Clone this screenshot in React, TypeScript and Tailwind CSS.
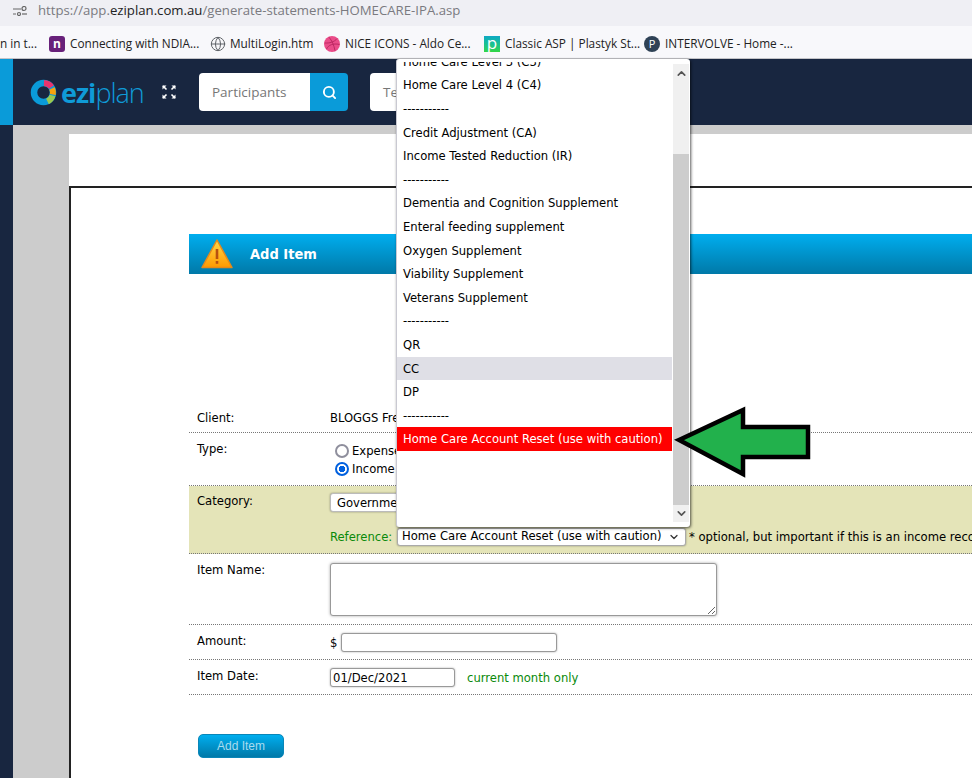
import React from 'react';
import { ChevronDown, ChevronUp, Globe, Search } from 'lucide-react';

const bookmarks = [
  { label: 'Connecting with NDIA...', left: 'n' },
  { label: 'MultiLogin.htm', left: 'globe' },
  { label: 'NICE ICONS - Aldo Ce...', left: 'dribbble' },
  { label: 'Classic ASP | Plastyk St...', left: 'plastyk' },
  { label: 'INTERVOLVE - Home -...', left: 'intervolve' },
];

const menuItems = [
  'Home Care Level 3 (C3)',
  'Home Care Level 4 (C4)',
  '-----------',
  'Credit Adjustment (CA)',
  'Income Tested Reduction (IR)',
  '-----------',
  'Dementia and Cognition Supplement',
  'Enteral feeding supplement',
  'Oxygen Supplement',
  'Viability Supplement',
  'Veterans Supplement',
  '-----------',
  'QR',
  'CC',
  'DP',
  '-----------',
  'Home Care Account Reset (use with caution)',
];

function Favicon({ kind }: { kind: string }) {
  if (kind === 'n') {
    return (
      <span className="w-4 h-4 rounded-[3px] bg-[#68217a] text-white text-[12px] leading-[15px] font-bold text-center">
        n
      </span>
    );
  }
  if (kind === 'globe') {
    return <Globe size={16} strokeWidth={1.5} className="text-[#5f6368]" />;
  }
  if (kind === 'dribbble') {
    return (
      <svg width="16" height="16" viewBox="0 0 16 16" fill="none">
        <circle cx="8" cy="8" r="8" fill="#ea4c89" />
        <path d="M5 1.2c3 3.500 5 8 6 13.500M.6 7c5 .3 9.400-.8 12.600-4.500M2.500 13c2-4 6.500-6 13-4.500" stroke="#b8255f" strokeWidth="0.9" />
      </svg>
    );
  }
  if (kind === 'plastyk') {
    return (
      <span className="w-4 h-4 bg-gradient-to-b from-[#12a8c4] to-[#33d63f] text-white text-[17px] leading-[13px] text-center">
        p
      </span>
    );
  }
  return (
    <span className="w-4 h-4 rounded-full bg-[#2f4256] text-white text-[11px] leading-[15px] text-center">P</span>
  );
}

function Logo() {
  return (
    <div className="flex items-center gap-[4px]">
      <svg width="27" height="27" viewBox="0 0 27 27" fill="none">
        <circle cx="13.500" cy="13.500" r="9.500" stroke="#0a9bd9" strokeWidth="6.500" />
        <path d="M14 4a9.500 9.500 0 0 1 7.500 4" stroke="#e8336e" strokeWidth="6" />
        <path d="M22 9.500a9.500 9.500 0 0 1 .8 6" stroke="#f7a30c" strokeWidth="6" />
        <path d="M22.500 16.500a9.500 9.500 0 0 1-5 6" stroke="#9bc94f" strokeWidth="6" />
      </svg>
      <div className="font-['Open_Sans',sans-serif] text-[#0f9bd8] text-[27px] leading-none tracking-[-1px]">
        <span className="font-bold">ezi</span>
        <span className="font-light">plan</span>
      </div>
    </div>
  );
}

function ExpandIcon() {
  return (
    <svg width="14" height="14" viewBox="0 0 14 14" fill="none" stroke="white" strokeWidth="1.600" className="ml-[18px]">
      <path d="M1 1l3.500 3.500M9.500 9.500L13 13M13 1L9.500 4.500M4.500 9.500L1 13" />
      <path d="M.5.500h4l-4 4zM13.500.500h-4l4 4zM.5 13.500h4l-4-4zM13.500 13.500h-4l4-4z" fill="white" stroke="none" />
    </svg>
  );
}

function WarningIcon() {
  return (
    <svg width="32" height="32" viewBox="0 0 32 32">
      <defs>
        <linearGradient id="warn" x1="0" y1="0" x2="0" y2="1">
          <stop offset="0" stopColor="#ffd84a" />
          <stop offset="1" stopColor="#ff9a00" />
        </linearGradient>
      </defs>
      <path d="M16 2L31 29.500H1z" fill="url(#warn)" stroke="#e58a1a" strokeWidth="1.500" strokeLinejoin="round" />
      <rect x="14.700" y="11" width="2.600" height="10" fill="#b8500f" />
      <rect x="14.700" y="23" width="2.600" height="2.800" fill="#b8500f" />
    </svg>
  );
}

function Row({ label, className, children }: { label: string; className: string; children: React.ReactNode }) {
  return (
    <div className={`flex border-b border-dotted border-[#777] pl-2 ${className}`}>
      <div className="w-[133px] shrink-0 -mt-[2px]">{label}</div>
      <div className="flex-1 min-w-0">{children}</div>
    </div>
  );
}

function Radio({ label, checked }: { label: string; checked?: boolean }) {
  return (
    <label className="flex items-center gap-[3px] h-[18px] pl-[5px]">
      <input
        type="radio"
        name="type"
        defaultChecked={checked}
        className="appearance-none w-[14px] h-[14px] m-0 rounded-full border-2 border-[#8f8f9d] bg-white checked:border-[#0060df] checked:bg-[radial-gradient(circle,#0060df_0_3px,white_3.500px)]"
      />
      {label}
    </label>
  );
}

function ReferenceMenu() {
  return (
    <div className="absolute left-[396px] top-[59px] w-[294px] h-[468px] bg-white flex overflow-hidden border-l border-[#c9c9d2] rounded-[3px] shadow-[1px_1px_3px_rgba(0,0,0,0.65)] font-['DejaVu_Sans_Condensed','DejaVu_Sans',sans-serif] text-[12.900px] text-black">
      <div className="w-[275px] mt-[3px] shrink-0 overflow-hidden">
        <div className="-mt-[12.200px]">
          {menuItems.map((item, i) => (
            <div
              key={i}
              className={`h-[23.600px] leading-[23.600px] pl-[6px] whitespace-nowrap ${
                item === 'CC' ? 'bg-[#dfdfe6]' : ''
              } ${item.startsWith('Home Care Account') ? 'bg-[#ff0000] text-white' : ''}`}
            >
              {item}
            </div>
          ))}
        </div>
      </div>
      <div className="w-[16px] ml-[1px] mt-[5px] mb-[5px] bg-[#f0f0f0] flex flex-col items-center">
        <div className="h-[90px] w-full pt-[3px] flex justify-center">
          <ChevronUp size={13} strokeWidth={3} className="text-[#555]" />
        </div>
        <div className="w-full h-[351px] bg-[#cdcdcd]" />
        <div className="flex-1 flex items-center">
          <ChevronDown size={13} strokeWidth={3} className="text-[#555]" />
        </div>
      </div>
    </div>
  );
}

export default function App() {
  return (
    <div className="relative w-[972px] h-[778px] overflow-hidden flex flex-col bg-white">
      {/* browser chrome */}
      <div className="h-[26px] bg-[#efeff4] flex items-center pl-[13px] pb-[4px] gap-[11px] font-['Open_Sans',sans-serif] text-[13.200px] text-[#7a7a80] shrink-0">
        <svg width="14" height="10" viewBox="0 0 14 10" fill="none" stroke="#666" strokeWidth="1.200">
          <path d="M0 3h8M0 8h3" />
          <circle cx="11" cy="2.500" r="2" />
          <rect x="4.500" y="6.500" width="3" height="3" rx="1.500" />
          <path d="M9 8h5" />
        </svg>
        <div className="whitespace-nowrap">
          https://app.<span className="text-[#222]">eziplan.com.au</span>/generate-statements-HOMECARE-IPA.asp
        </div>
      </div>
      <div className="h-[33px] bg-[#f8f8fb] border-b border-[#c4c4c8] pt-[4px] flex items-center font-['Open_Sans',sans-serif] text-[11.800px] text-[#222] whitespace-nowrap shrink-0">
        <div className="w-[49px] overflow-hidden flex justify-end pr-[12px]">
          <span>n in t...</span>
        </div>
        <div className="flex items-center gap-[5px] w-[161px]">
          <Favicon kind="n" />
          <span>{bookmarks[0].label}</span>
        </div>
        <div className="flex items-center gap-[4px] w-[114px]">
          <Favicon kind="globe" />
          <span>{bookmarks[1].label}</span>
        </div>
        <div className="flex items-center gap-[5px] w-[160px]">
          <Favicon kind="dribbble" />
          <span>{bookmarks[2].label}</span>
        </div>
        <div className="flex items-center gap-[5px] w-[160px]">
          <Favicon kind="plastyk" />
          <span>{bookmarks[3].label}</span>
        </div>
        <div className="flex items-center gap-[5px]">
          <Favicon kind="intervolve" />
          <span>{bookmarks[4].label}</span>
        </div>
      </div>

      {/* app header */}
      <div className="h-[66px] bg-[#182640] border-l-[13px] border-[#0a9bd9] flex items-center pl-[17px] shrink-0">
        <div className="w-[114px] shrink-0">
          <Logo />
        </div>
        <ExpandIcon />
        <div className="flex ml-[23px] h-[38px] w-[149px] rounded-[4px] overflow-hidden font-['Open_Sans',sans-serif] text-[13.500px] text-[#777]">
          <div className="w-[111px] bg-white pl-[13px] leading-[38px]">Participants</div>
          <div className="w-[38px] bg-[#0a9bd9] flex items-center justify-center">
            <Search size={15} strokeWidth={3} className="text-white" />
          </div>
        </div>
        <div className="ml-[22px] h-[38px] w-[150px] rounded-[4px] bg-white pl-[13px] leading-[38px] font-['Open_Sans',sans-serif] text-[13.500px] text-[#777]">
          Te
        </div>
      </div>

      {/* page body */}
      <div className="flex-1 flex min-h-0">
        <div className="w-[13px] bg-[#182640] shrink-0" />
        <div className="flex-1 min-w-0 bg-[#cccccc] pl-[56px] pt-[9px] flex flex-col">
          <div className="h-[52px] bg-white shrink-0" />
          <div className="flex-1 bg-white border-t-2 border-l-2 border-[#222] pl-[118px] pt-[46px] font-['DejaVu_Sans_Condensed','DejaVu_Sans',sans-serif] text-[12.900px] text-black">
            <div className="h-[40px] bg-gradient-to-b from-[#00aeef] to-[#0079a8] flex items-center pl-[12px] gap-[17px]">
              <WarningIcon />
              <span className="text-white font-bold text-[14.500px] mt-[1px]">Add Item</span>
            </div>

            <div className="mt-[131px] flex flex-col">
              <Row label="Client:" className="h-[28px] pt-[5px]">
                <div className="-mt-[2px]">BLOGGS Fred</div>
              </Row>
              <Row label="Type:" className="h-[53px] pt-[8px]">
                <div className="mt-[1px]">
                  <Radio label="Expense" />
                  <Radio label="Income" checked />
                </div>
              </Row>
              <Row label="Category:" className="h-[68px] pt-[7px] bg-[#e4e4b8]">
                <select className="block h-[19px] w-[300px] bg-white border border-[#bbb] rounded-[3px] pl-[2px] shadow-[0_0_2px_rgba(0,0,0,0.4)]">
                  <option>Government Funding</option>
                </select>
                <div className="flex items-center mt-[15px] whitespace-nowrap">
                  <span className="text-[#0a8a0a] w-[67px] shrink-0">Reference:</span>
                  <div className="relative w-[289px] h-[18px] shrink-0">
                    <select className="appearance-none block w-full h-full bg-white border border-[#aaa] rounded-[3px] pl-[4px] pb-[2px] leading-[13px] shadow-[0_0_2px_rgba(0,0,0,0.4)]">
                      <option>Home Care Account Reset (use with caution)</option>
                    </select>
                    <ChevronDown size={12} strokeWidth={2.5} className="absolute right-[6px] top-[3px] text-[#333]" />
                  </div>
                  <span className="ml-[3px]">* optional, but important if this is an income record</span>
                </div>
              </Row>
              <Row label="Item Name:" className="h-[71px] pt-[8px]">
                <textarea className="block mt-[1px] w-[387px] h-[53px] bg-white border border-[#999] rounded-[3px] shadow-[0_0_3px_rgba(0,0,0,0.35)]" />
              </Row>
              <Row label="Amount:" className="h-[35px] pt-[8px]">
                <div className="flex items-center gap-[4px]">
                  <span>$</span>
                  <input type="text" className="w-[216px] h-[19px] bg-white border border-[#999] rounded-[3px] shadow-[0_0_2px_rgba(0,0,0,0.35)]" />
                </div>
              </Row>
              <Row label="Item Date:" className="h-[35px] pt-[8px]">
                <div className="flex items-center gap-[12px]">
                  <input
                    type="text"
                    defaultValue="01/Dec/2021"
                    className="w-[125px] h-[19px] bg-white border border-[#999] rounded-[3px] pl-[2px] shadow-[0_0_2px_rgba(0,0,0,0.35)]"
                  />
                  <span className="text-[#0a8a0a]">current month only</span>
                </div>
              </Row>
            </div>

            <button className="mt-[39px] ml-[9px] block w-[86px] h-[24px] rounded-[5px] bg-gradient-to-b from-[#00aeef] to-[#0079a8] border border-[#0a86b8] text-[#a8dcef] text-[12px] font-['Liberation_Sans',sans-serif]">
              Add Item
            </button>
          </div>
        </div>
      </div>

      <ReferenceMenu />

      {/* annotation arrow */}
      <svg className="absolute left-[670px] top-[400px]" width="145" height="80" viewBox="0 0 145 80">
        <path d="M9 40L73 10V27H138V57H73V74Z" fill="#22b14c" stroke="black" strokeWidth="4.500" />
      </svg>
    </div>
  );
}
